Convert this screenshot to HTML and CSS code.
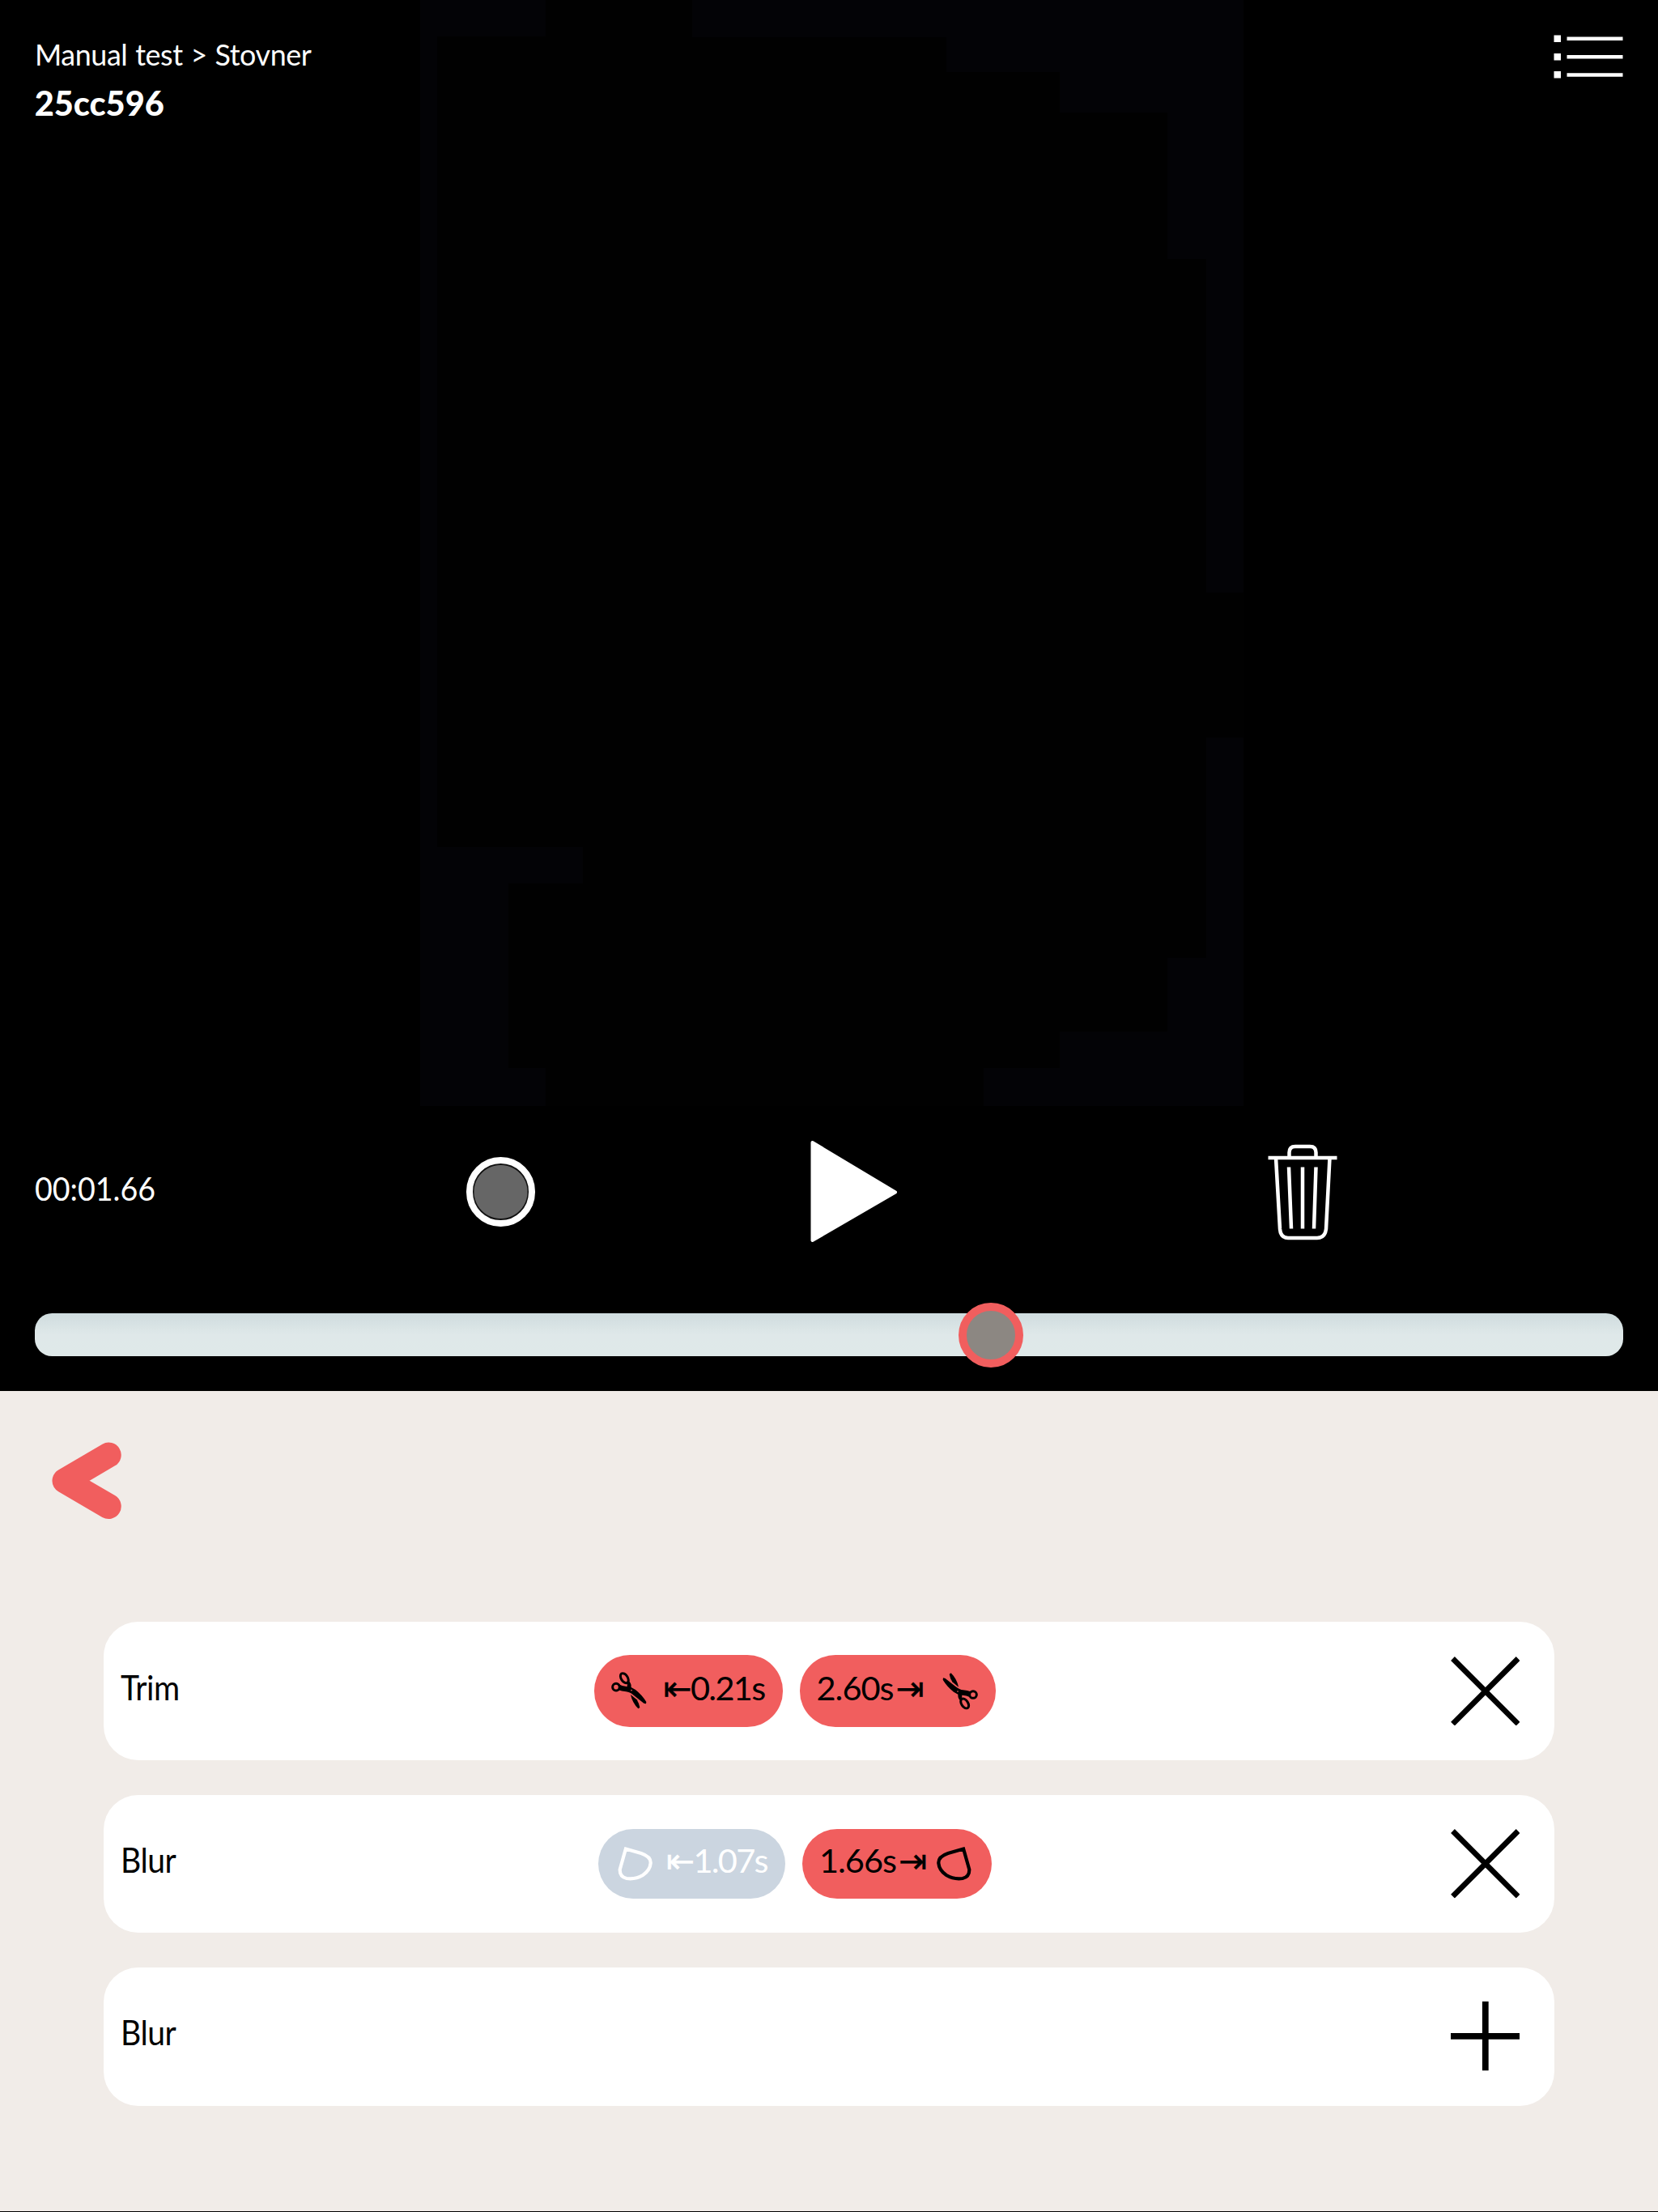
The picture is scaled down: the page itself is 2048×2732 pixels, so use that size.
FILE: index.html
```html
<!DOCTYPE html>
<html lang="en">
<head>
<meta charset="utf-8">
<title>25cc596</title>
<link rel="stylesheet" href="styles.css">
</head>
<body>
<svg class="defs" aria-hidden="true">
  <defs>
    <symbol id="scissors" viewBox="0 0 132 140">
      <ellipse cx="49" cy="23" rx="12" ry="20" transform="rotate(-33 49 23)" fill="none" stroke="currentColor" stroke-width="9"/>
      <circle cx="18" cy="56" r="13" fill="none" stroke="currentColor" stroke-width="9"/>
      <path d="M28 46 Q45 55 60 54 L70 51 L74 57 L90 66 Q115 86 130 111 L129 118 L121 116 L83 86 Q68 74 55 73 Q38 71 27 67Z" fill="currentColor"/>
      <path d="M60 30 Q75 38 74 56 L59 55Z" fill="currentColor"/>
      <path d="M72 84 L95 103 Q104 118 106 132 L100 136 Q78 114 72 84Z" fill="currentColor"/>
      <circle cx="75" cy="68" r="2.5" fill="#f15e5e"/>
    </symbol>
    <symbol id="blob" viewBox="0 0 48 48">
      <path d="M12.9 5.500 L32 11 Q44 15 43.700 23 Q43 32 34 38 Q25 43.500 14 42 Q5.500 40 5.700 31Z" fill="none" stroke="currentColor" stroke-width="4.200"/>
    </symbol>
    <symbol id="cross" viewBox="0 0 86 86">
      <path d="M2.500 2.500 L83.500 83.500 M83.500 2.500 L2.500 83.500" fill="none" stroke="currentColor" stroke-width="6.800"/>
    </symbol>
    <symbol id="plus" viewBox="0 0 86 86">
      <path d="M43 0 V86 M0 43 H86" fill="none" stroke="currentColor" stroke-width="7.800"/>
    </symbol>
  </defs>
</svg>

<section class="player">
  <svg class="video" viewBox="0 0 2048 1366" aria-hidden="true">
    <path fill="#010101" d="M519 0H1536V1366H519Z"/>
    <path fill="#030306" d="M519 0H674V45H540V1046H720V1091H628V1319H674V1366H519Z M855 0H1536V732H1490V320H1442V139H1309V89H1169V46H855Z M1490 911H1536V1366H1215V1319H1309V1274H1442V1183H1490Z"/>
  </svg>
  <header class="topbar">
    <div class="titles">
      <div class="crumbs">Manual test &gt; Stovner</div>
      <div class="clip">25cc596</div>
    </div>
    <svg class="menu" width="86" height="56" viewBox="0 0 86 56">
      <path fill="#fff" d="M0.500 1.500h8.500v8.500H0.500z M0.500 24h8.500v8.500H0.500z M0.500 46h8.500v8.500H0.500z M16.500 3.500h69v4.500H16.500z M16.500 26h69v4.500H16.500z M16.500 48.300h69v4.500H16.500z"/>
    </svg>
  </header>
  <div class="controls">
    <div class="time">00:01.66</div>
    <div class="record"></div>
    <svg class="play" width="108" height="128" viewBox="0 0 108 128">
      <path d="M3.500 3 L106 64.500 L3.500 124Z" fill="#fff" stroke="#fff" stroke-width="4" stroke-linejoin="round"/>
    </svg>
    <svg class="trash" width="86" height="120" viewBox="0 0 86 120" fill="none" stroke="#fff" stroke-width="4.500">
      <path d="M0.500 18H85.500 M26.500 17V11.500Q26.500 4 34 4H52Q59.500 4 59.500 11.500V17"/>
      <path d="M10 18L15 106Q16 117 25 117H61Q70.500 117 72 106L76.500 18"/>
      <path d="M26 29.500L29 105.500M43 29.500V105.500M59.500 29.500L57 105.500"/>
    </svg>
  </div>
  <div class="track"><div class="knob" style="left:60.200%"></div></div>
</section>

<main class="panel">
  <svg class="back" width="86" height="96" viewBox="0 0 86 96">
    <path d="M70.200 16L16 47.800L70.200 79.500" fill="none" stroke="#f15e5e" stroke-width="31" stroke-linecap="round" stroke-linejoin="round"/>
  </svg>
  <div class="rows">
    <div class="row">
      <div class="label">Trim</div>
      <div class="pills">
        <div class="pill trim-in"><svg class="scissors"><use href="#scissors"/></svg><span class="value start"><span class="arrow">⇤</span>0.21s</span></div>
        <div class="pill trim-out"><span class="value end">2.60s<span class="arrow">⇥</span></span><svg class="scissors turned"><use href="#scissors"/></svg></div>
      </div>
      <svg class="action"><use href="#cross"/></svg>
    </div>
    <div class="row">
      <div class="label">Blur</div>
      <div class="pills">
        <div class="pill blur-in muted"><svg class="blob"><use href="#blob"/></svg><span class="value start"><span class="arrow">⇤</span>1.07s</span></div>
        <div class="pill blur-out"><span class="value end">1.66s<span class="arrow">⇥</span></span><svg class="blob mirrored"><use href="#blob"/></svg></div>
      </div>
      <svg class="action"><use href="#cross"/></svg>
    </div>
    <div class="row">
      <div class="label">Blur</div>
      <div class="pills"></div>
      <svg class="action"><use href="#plus"/></svg>
    </div>
  </div>
</main>
</body>
</html>
```

FILE: styles.css
```css
* { box-sizing: border-box; }
body {
  margin: 0;
  width: 2048px;
  height: 2732px;
  display: flex;
  flex-direction: column;
  overflow: hidden;
  background: #000;
  font-family: Lato, "Liberation Sans", sans-serif;
  font-size: 42px;
}
svg { display: block; flex: none; }
.defs { position: absolute; width: 0; height: 0; }

.player {
  position: relative;
  height: 1717.5px;
  flex: none;
  display: flex;
  flex-direction: column;
  padding: 42px 42.67px 42.2px;
  background: #000;
  color: #fff;
}
.video { position: absolute; left: 0; top: 0; width: 2048px; height: 1366px; }
.topbar { position: relative; display: flex; justify-content: space-between; flex: 1; }
.crumbs {
  margin-top: 1.5px;
  font-size: 37.5px;
  line-height: 46px;
  letter-spacing: -0.4px;
  word-spacing: 1px;
  white-space: nowrap;
  transform: scaleX(0.955);
  transform-origin: left;
}
.clip { margin-top: 11px; font-size: 41.5px; line-height: 53px; font-weight: 900; }
.controls {
  display: grid;
  grid-template-columns: 533.3px 424.5px 566px auto;
  align-items: center;
  height: 128px;
  margin-bottom: 86px;
}
.time {
  padding-bottom: 10px;
  font-size: 41.5px;
  line-height: 50px;
  transform: scaleX(0.905);
  transform-origin: left;
}
.record {
  width: 85.4px;
  height: 85.4px;
  border: 8.5px solid #fff;
  border-radius: 50%;
  background: radial-gradient(circle, #666 32.5px, #111 33.5px);
}
.track {
  position: relative;
  height: 53.3px;
  border-radius: 21.3px;
  background: linear-gradient(#cfdcde, #dfe8e9 50%, #dfe9e9);
}
.knob {
  position: absolute;
  top: 50%;
  width: 80px;
  height: 80px;
  margin: -40px 0 0 -40px;
  border: 10.6px solid #f15e5e;
  border-radius: 50%;
  background: #8c8782;
}

.panel {
  height: 1013px;
  flex: none;
  padding: 63.5px 128px 0;
  background: #f1ece8;
  color: #000;
}
.back { margin-left: -64px; }
.rows { display: flex; flex-direction: column; gap: 42.67px; margin-top: 126.3px; }
.row {
  display: grid;
  grid-template-columns: 240px 1fr 302.7px;
  align-items: center;
  height: 170.67px;
  padding: 0 42.67px 0 21.33px;
  border-radius: 42.67px;
  background: #fff;
}
.label, .value { padding-bottom: 10px; line-height: 50px; white-space: nowrap; }
.label { letter-spacing: -0.5px; transform: scaleX(0.93); transform-origin: left; }
.pills { display: flex; justify-content: center; gap: 21.3px; }
.pill {
  display: flex;
  align-items: center;
  justify-content: space-between;
  height: 85.6px;
  padding: 0 21.3px 0 20.5px;
  border-radius: 44px;
  background: #f15e5e;
}
.value { font-size: 41.5px; letter-spacing: -1px; }
.start { margin-right: 1px; letter-spacing: -1.7px; }
.arrow {
  font-family: "DejaVu Sans", sans-serif;
  font-size: 42px;
  line-height: 1;
  -webkit-text-stroke: 0.4px currentColor;
}
.end .arrow { margin-left: 3px; }
.muted { background: #cbd5e0; color: #fff; }
.trim-in { width: 232.4px; height: 88.7px; }
.trim-out { width: 241.6px; height: 88.7px; }
.blur-in { width: 231px; }
.blur-out { width: 233.3px; }
.scissors { width: 44px; height: 46.7px; }
.turned { transform: rotate(180deg); }
.blob { width: 48px; height: 48px; }
.blur-out .value { margin-right: -4px; }
.mirrored { transform: scaleX(-1); }
.action { width: 85.6px; height: 85.6px; justify-self: end; }
```
